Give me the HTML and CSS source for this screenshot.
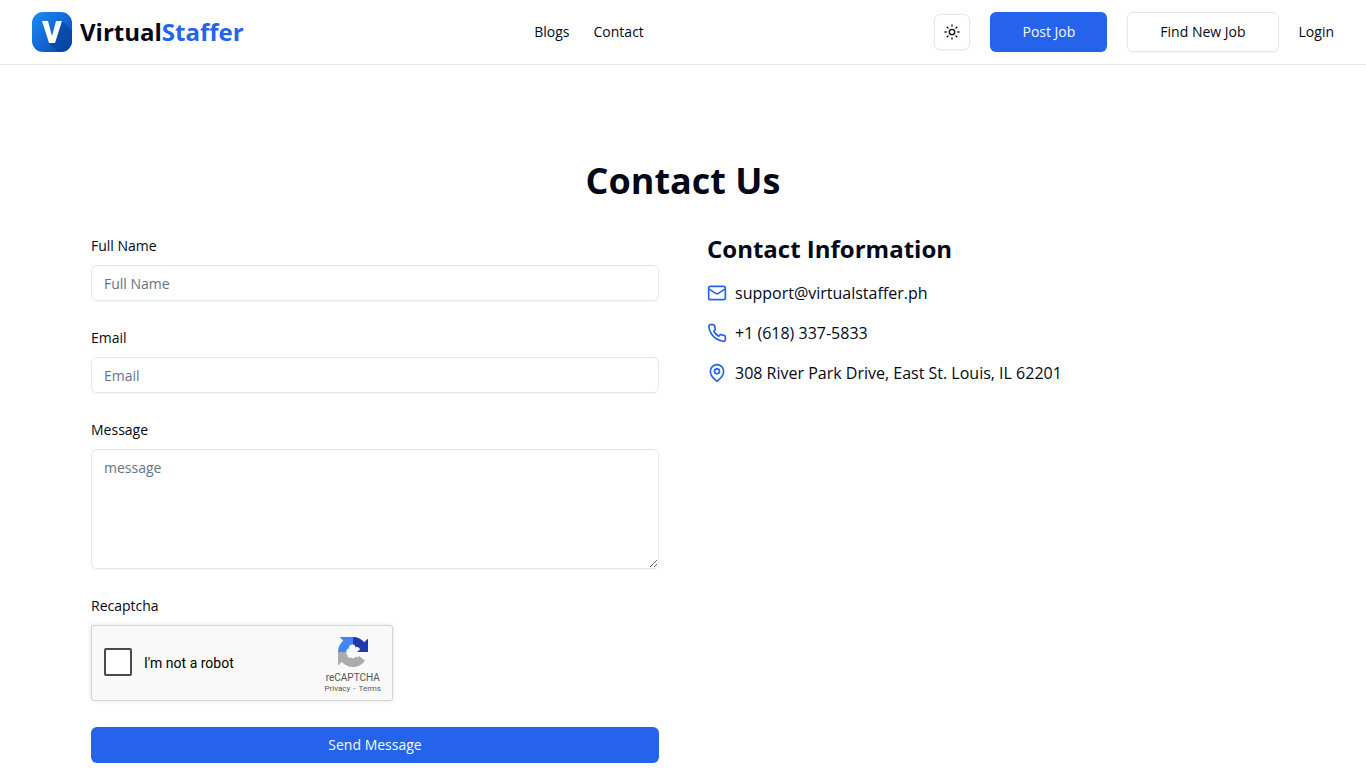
FILE: index.html
```html
<!DOCTYPE html>
<html lang="en">
<head>
    <meta charset="UTF-8">
    <meta name="viewport" content="width=device-width, initial-scale=1.0">
    <title>Contact Us - VirtualStaffer</title>
    <link rel="stylesheet" href="styles.css">
</head>
<body>
    <header class="header">
        <a class="logo" href="#">
            <svg width="40" height="40" viewBox="0 0 40 40" aria-hidden="true">
                <defs>
                    <linearGradient id="logoBg" x1="0" y1="0" x2="1" y2="1">
                        <stop offset="0" stop-color="#1c8df5"/>
                        <stop offset="0.5" stop-color="#1268d6"/>
                        <stop offset="1" stop-color="#0647a4"/>
                    </linearGradient>
                    <clipPath id="logoClip"><rect width="40" height="40" rx="11"/></clipPath>
                </defs>
                <g clip-path="url(#logoClip)">
                    <rect width="40" height="40" fill="url(#logoBg)"/>
                    <path d="M30 9L40 19V40H26L17 31L22 20Z" fill="#06409a" opacity="0.6"/>
                    <path d="M10 9H16L20 24L24 9H30L23 31H17Z" fill="#fff"/>
                </g>
            </svg>
            <span class="logo-text">Virtual<span>Staffer</span></span>
        </a>
        <nav class="nav">
            <a href="#">Blogs</a>
            <a href="#">Contact</a>
        </nav>
        <div class="actions">
            <button class="btn btn-icon" type="button" aria-label="Toggle theme">
                <svg width="16" height="16" viewBox="0 0 16 16" aria-hidden="true">
                    <g fill="none" stroke="currentColor" stroke-width="1.3" stroke-linecap="round">
                        <circle cx="8" cy="8" r="2.700"/>
                        <path d="M8 1v1.200M8 13.800V15M1 8h1.200M13.800 8H15M3.200 3.200l.8.8M12 12l.8.8M3.200 12.800l.8-.8M12 4l.8-.8"/>
                    </g>
                </svg>
            </button>
            <button class="btn btn-primary" type="button">Post Job</button>
            <button class="btn btn-outline" type="button">Find New Job</button>
            <a href="#">Login</a>
        </div>
    </header>

    <main class="container">
        <h1>Contact Us</h1>
        <div class="columns">
            <form class="contact-form">
                <div class="field">
                    <label for="name">Full Name</label>
                    <input type="text" id="name" name="name" placeholder="Full Name">
                </div>
                <div class="field">
                    <label for="email">Email</label>
                    <input type="email" id="email" name="email" placeholder="Email">
                </div>
                <div class="field">
                    <label for="message">Message</label>
                    <textarea id="message" name="message" placeholder="message"></textarea>
                </div>
                <div class="field">
                    <label for="robot">Recaptcha</label>
                    <div class="captcha">
                        <input type="checkbox" id="robot" name="robot">
                        <label for="robot">I'm not a robot</label>
                        <div class="captcha-brand">
                            <svg width="32" height="32" viewBox="0 0 64 64" aria-hidden="true">
                                <path d="M62 32V5l-7.500 7.500C49 6 41 2 32 2v15c4 0 5 3 5 6 4-2 8 0 9 4l-6 5Z" fill="#1c3aa9"/>
                                <path d="M32 2H5l7.500 7.500C6 15 2 23 2 32h17c-1-4 1-7 5-7-1-4 2-8 8-8Z" fill="#4285f4"/>
                                <path d="M2 32v27l7.500-7.500C15 58 23 62 32 62c10 0 19-5 24-13l-12-9c-2 3-5 3-7 1-1 4-6 5-8 2-4 2-9 0-8-5-2-1-3-3-2-6Z" fill="#ababab"/>
                            </svg>
                            <div class="captcha-name">reCAPTCHA</div>
                            <div class="captcha-links"><a href="#">Privacy</a> - <a href="#">Terms</a></div>
                        </div>
                    </div>
                </div>
                <button class="btn btn-primary btn-send" type="submit">Send Message</button>
            </form>

            <section class="info">
                <h2>Contact Information</h2>
                <ul>
                    <li>
                        <svg class="icon" viewBox="0 0 24 24" aria-hidden="true">
                            <rect width="20" height="16" x="2" y="4" rx="2"/>
                            <path d="m22 7-8.970 5.700a1.940 1.940 0 0 1-2.060 0L2 7"/>
                        </svg>
                        support@virtualstaffer.ph
                    </li>
                    <li>
                        <svg class="icon" viewBox="0 0 24 24" aria-hidden="true">
                            <path d="M22 16.920v3a2 2 0 0 1-2.180 2 19.790 19.790 0 0 1-8.630-3.070 19.500 19.500 0 0 1-6-6 19.790 19.790 0 0 1-3.070-8.670A2 2 0 0 1 4.110 2h3a2 2 0 0 1 2 1.720 12.840 12.840 0 0 0 .7 2.810 2 2 0 0 1-.45 2.110L8.090 9.910a16 16 0 0 0 6 6l1.270-1.270a2 2 0 0 1 2.110-.45 12.840 12.840 0 0 0 2.810.7A2 2 0 0 1 22 16.920z"/>
                        </svg>
                        +1 (618) 337-5833
                    </li>
                    <li>
                        <svg class="icon" viewBox="0 0 24 24" aria-hidden="true">
                            <path d="M20 10c0 6-8 12-8 12s-8-6-8-12a8 8 0 0 1 16 0Z"/>
                            <circle cx="12" cy="10" r="3"/>
                        </svg>
                        308 River Park Drive, East St. Louis, IL 62201
                    </li>
                </ul>
            </section>
        </div>
    </main>
</body>
</html>
```

FILE: styles.css
```css
* {
    box-sizing: border-box;
}
body {
    margin: 0;
    background-color: #ffffff;
    color: #020817;
    font-family: "Open Sans", sans-serif;
    font-size: 16px;
    line-height: 24px;
}
a {
    color: inherit;
    text-decoration: none;
}
h1, h2, ul {
    margin: 0;
    padding: 0;
}
h1, h2, .logo-text {
    font-weight: 700;
}
svg {
    display: block;
    flex-shrink: 0;
}

/* Header */
.header {
    display: flex;
    align-items: center;
    justify-content: space-between;
    padding: 12px 32px;
    border-bottom: 1px solid #e2e8f0;
}
.logo {
    display: flex;
    align-items: center;
    gap: 8px;
}
.logo-text {
    font-size: 24px;
    line-height: 32px;
}
.logo-text span {
    color: #2563eb;
}
.nav, .actions {
    display: flex;
    align-items: center;
    font-size: 14px;
    line-height: 20px;
}
.nav {
    gap: 24px;
}
.actions {
    gap: 20px;
}

/* Buttons */
.btn {
    display: flex;
    align-items: center;
    justify-content: center;
    height: 40px;
    padding: 0 32px;
    border: 1px solid #e2e8f0;
    border-radius: 6px;
    background-color: #ffffff;
    color: #020817;
    font-family: inherit;
    font-size: 14px;
    line-height: 20px;
    box-shadow: 0 1px 2px rgba(0, 0, 0, 0.05);
    cursor: pointer;
}
.btn-primary {
    border: none;
    background-color: #2563eb;
    color: #f8fafc;
}
.btn-icon {
    width: 36px;
    height: 36px;
    padding: 0;
}
.btn-send {
    width: 100%;
    height: 36px;
}

/* Contact page */
.container {
    max-width: 1280px;
    margin: 0 auto;
    padding: 96px 48px 0;
}
h1 {
    margin-bottom: 32px;
    font-size: 36px;
    line-height: 40px;
    text-align: center;
}
.columns {
    display: grid;
    grid-template-columns: 1fr 1fr;
    gap: 48px;
}
.contact-form {
    display: flex;
    flex-direction: column;
    gap: 24px;
}
.field {
    display: flex;
    flex-direction: column;
    gap: 6px;
}
.field label {
    font-size: 14px;
    line-height: 26px;
}
.field input[type="text"],
.field input[type="email"],
.field textarea {
    width: 100%;
    height: 36px;
    padding: 4px 12px;
    border: 1px solid #e2e8f0;
    border-radius: 6px;
    background-color: transparent;
    color: inherit;
    font-family: inherit;
    font-size: 14px;
    line-height: 20px;
    box-shadow: 0 1px 2px rgba(0, 0, 0, 0.05);
}
.field textarea {
    height: 120px;
    padding: 8px 12px;
}
.field ::placeholder {
    color: #64748b;
}

/* Captcha box */
.captcha {
    display: flex;
    align-items: center;
    width: 302px;
    height: 76px;
    margin-bottom: 2px;
    padding: 0 10px 0 12px;
    border: 1px solid #d3d3d3;
    border-radius: 3px;
    background-color: #f9f9f9;
    color: #000000;
    font-family: Roboto, sans-serif;
    box-shadow: 0 0 4px 1px rgba(0, 0, 0, 0.08);
}
.captcha input {
    appearance: none;
    width: 28px;
    height: 28px;
    margin: 0 12px 2px 0;
    border: 2px solid #4a4a4a;
    border-radius: 2px;
    background-color: #ffffff;
}
.captcha-brand {
    display: flex;
    flex-direction: column;
    align-items: center;
    margin-left: auto;
    padding-top: 4px;
    color: #555555;
}
.captcha-name {
    margin-top: 4px;
    font-size: 10px;
    line-height: 12px;
}
.captcha-links {
    font-size: 8px;
    line-height: 10px;
}
.captcha-links a {
    padding: 0 1px;
}

/* Contact information */
.info h2 {
    margin-bottom: 16px;
    font-size: 24px;
    line-height: 32px;
}
.info ul {
    display: flex;
    flex-direction: column;
    gap: 16px;
    list-style: none;
}
.info li {
    display: flex;
    align-items: center;
    gap: 8px;
}
.icon {
    width: 20px;
    height: 20px;
    fill: none;
    stroke: #2563eb;
    stroke-width: 2;
    stroke-linecap: round;
    stroke-linejoin: round;
}
```
